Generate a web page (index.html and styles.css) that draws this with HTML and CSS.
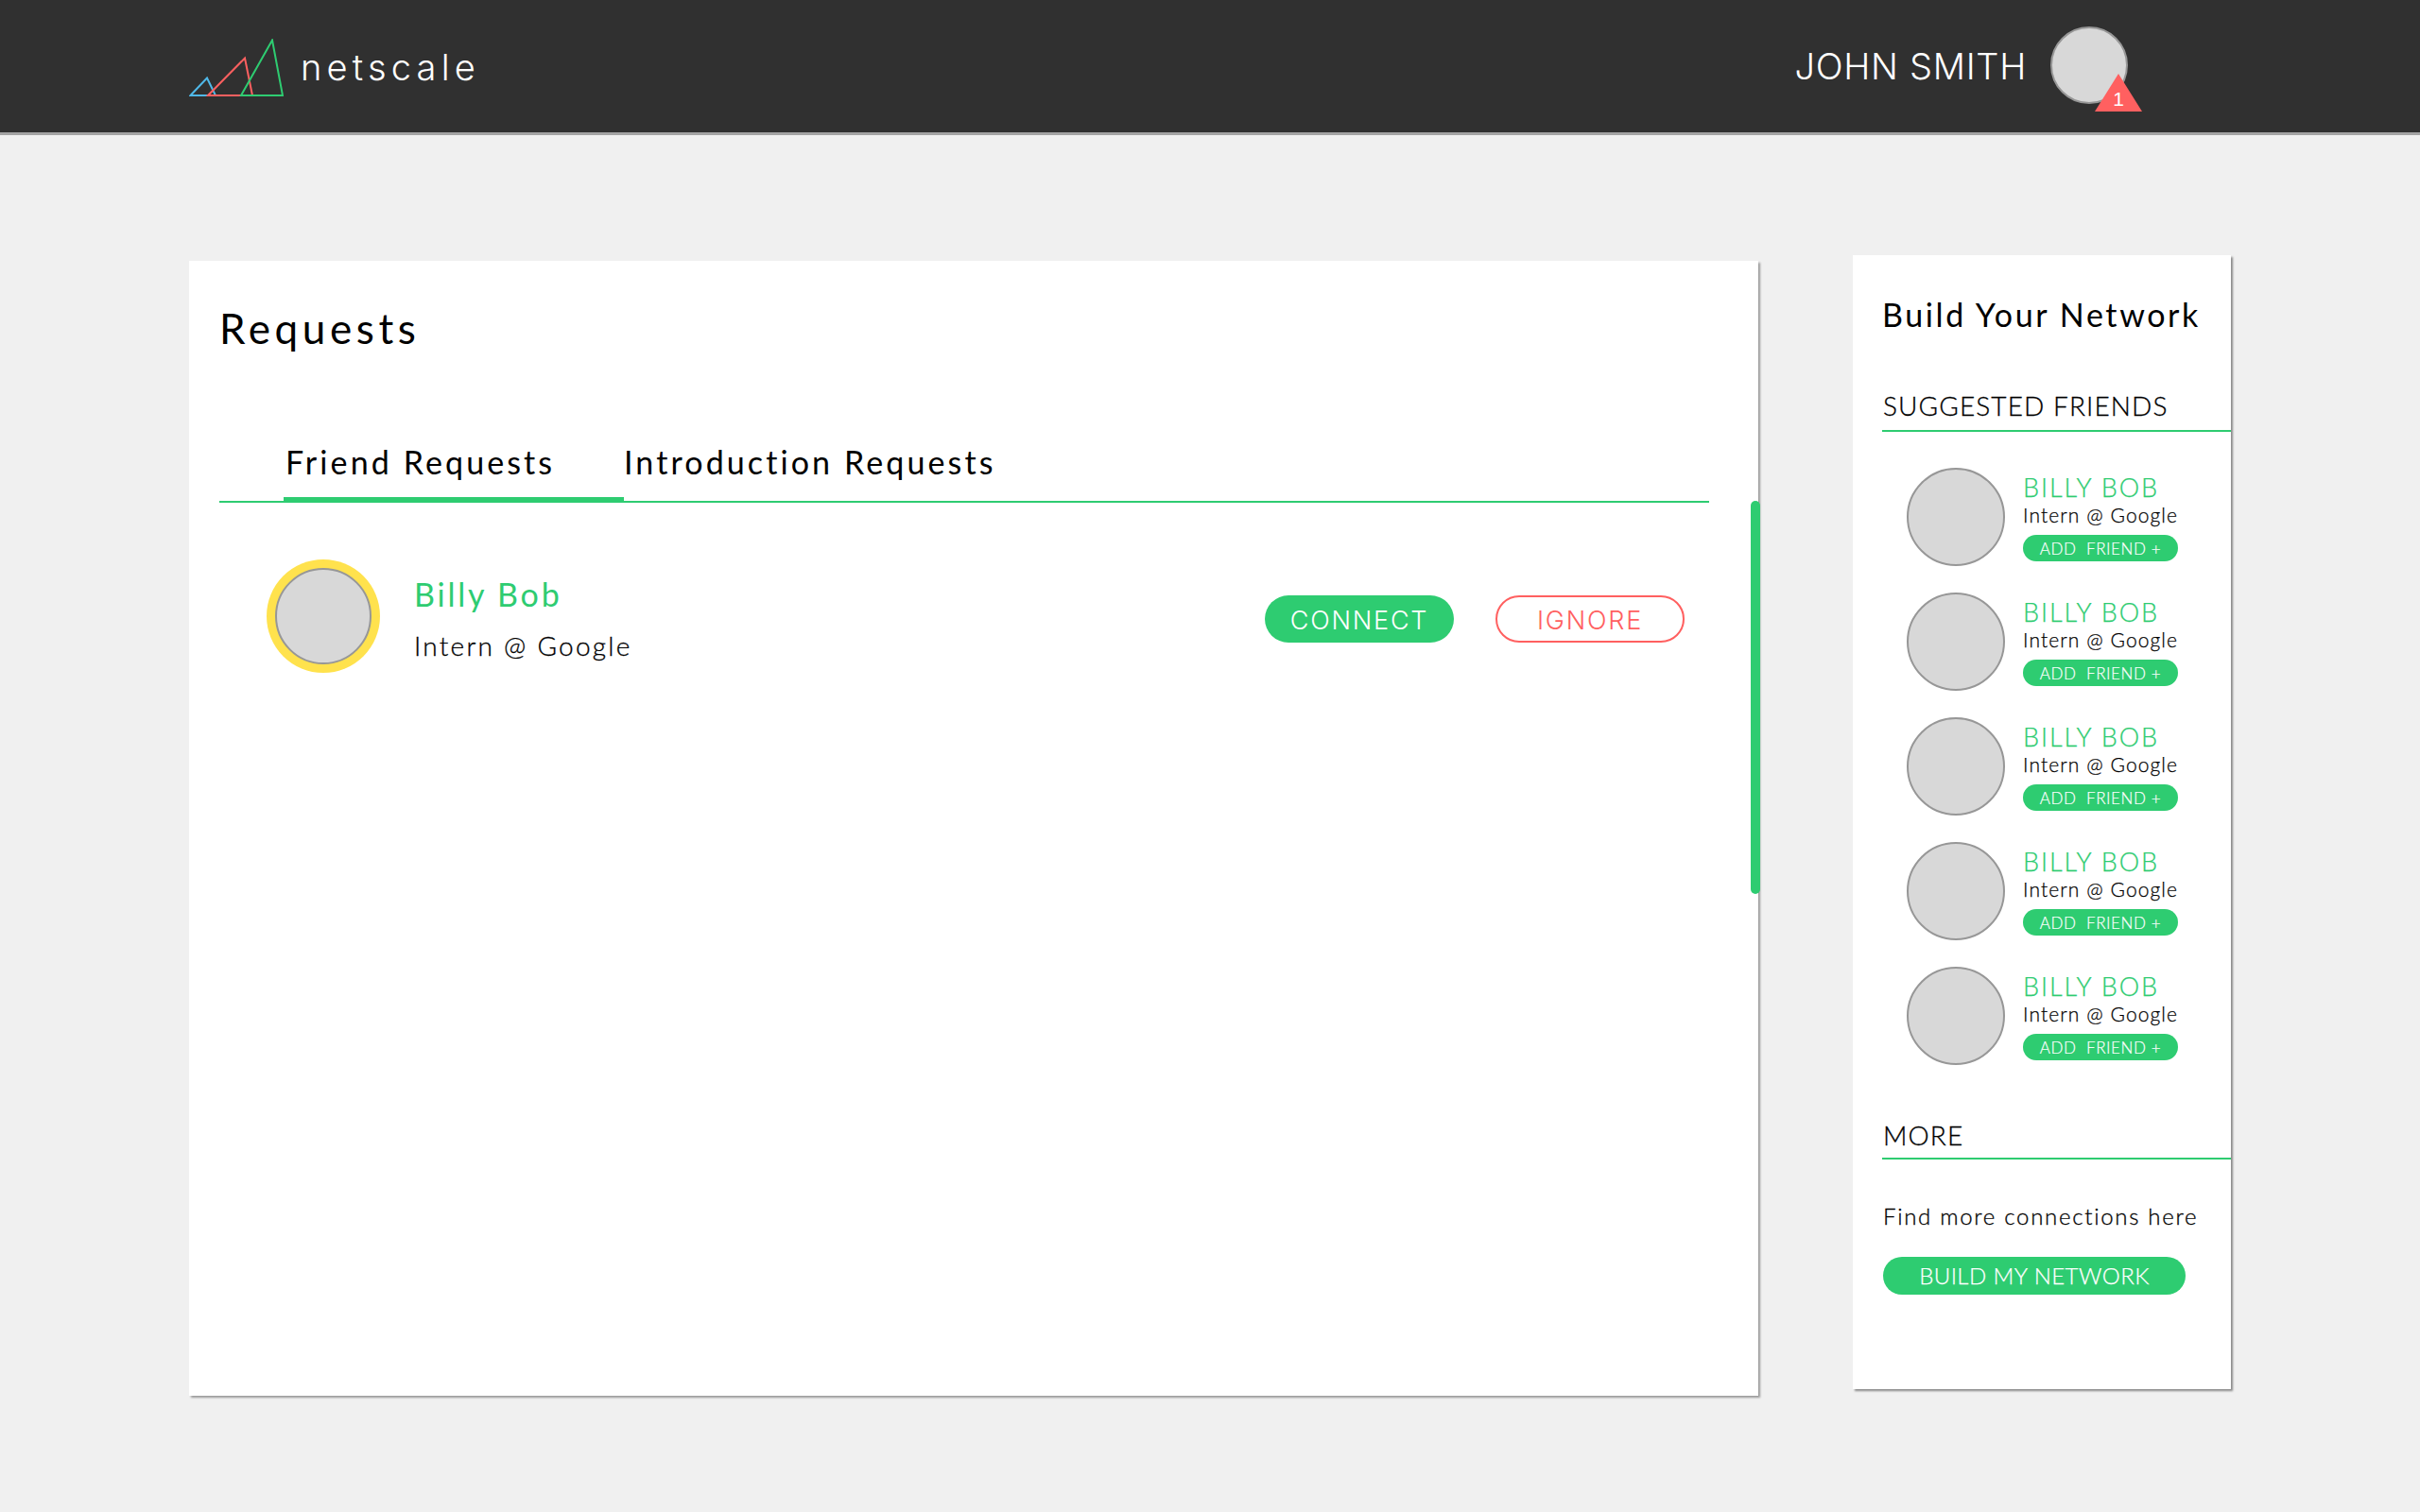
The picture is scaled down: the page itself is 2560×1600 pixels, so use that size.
FILE: index.html
```html
<!DOCTYPE html>
<html lang="en">
<head>
<meta charset="utf-8">
<title>netscale</title>
<link rel="stylesheet" href="styles.css">
</head>
<body>
<header class="topbar">
  <div class="brand">
    <svg class="brand-mark" viewBox="0 0 100 62" width="100" height="62" fill="none" stroke-width="2">
      <path d="M1.5 60 L19 41.5 L28 60 Z" stroke="#4fb8e8"/>
      <path d="M20 60 L59 20.5 L67 60 Z" stroke="#ff6060"/>
      <path d="M55 60 L88 1.5 L99 60 Z" stroke="#2ecc71"/>
    </svg>
    <span class="brand-name">netscale</span>
  </div>
  <div class="user">
    <span class="user-name">JOHN SMITH</span>
    <div class="user-avatar">
      <svg class="badge" viewBox="0 0 50 40" width="50" height="40">
        <path d="M0 40 L25 0 L50 40 Z" fill="#ff6060"/>
        <text x="25" y="34" text-anchor="middle" class="badge-num">1</text>
      </svg>
    </div>
  </div>
</header>

<main class="content">
  <section class="requests">
    <h1 class="requests-title">Requests</h1>
    <nav class="tabs">
      <div class="tab tab-active">Friend Requests</div>
      <div class="tab">Introduction Requests</div>
    </nav>
    <div class="request-row">
      <div class="ring"><div class="avatar avatar-lg"></div></div>
      <div class="request-info">
        <div class="request-name">Billy Bob</div>
        <div class="request-role">Intern @ Google</div>
      </div>
      <div class="request-actions">
        <div class="pill pill-connect">CONNECT</div>
        <div class="pill pill-ignore">IGNORE</div>
      </div>
    </div>
    <div class="scroll-thumb"></div>
  </section>

  <aside class="network">
    <h2 class="network-title">Build Your Network</h2>
    <h3 class="section-head">SUGGESTED FRIENDS</h3>
    <div class="suggestions">
      <div class="suggestion">
        <div class="avatar avatar-md"></div>
        <div class="suggestion-info">
          <div class="suggestion-name">BILLY BOB</div>
          <div class="suggestion-role">Intern @ Google</div>
          <div class="add-friend">ADD&nbsp; FRIEND +</div>
        </div>
      </div>
      <div class="suggestion">
        <div class="avatar avatar-md"></div>
        <div class="suggestion-info">
          <div class="suggestion-name">BILLY BOB</div>
          <div class="suggestion-role">Intern @ Google</div>
          <div class="add-friend">ADD&nbsp; FRIEND +</div>
        </div>
      </div>
      <div class="suggestion">
        <div class="avatar avatar-md"></div>
        <div class="suggestion-info">
          <div class="suggestion-name">BILLY BOB</div>
          <div class="suggestion-role">Intern @ Google</div>
          <div class="add-friend">ADD&nbsp; FRIEND +</div>
        </div>
      </div>
      <div class="suggestion">
        <div class="avatar avatar-md"></div>
        <div class="suggestion-info">
          <div class="suggestion-name">BILLY BOB</div>
          <div class="suggestion-role">Intern @ Google</div>
          <div class="add-friend">ADD&nbsp; FRIEND +</div>
        </div>
      </div>
      <div class="suggestion">
        <div class="avatar avatar-md"></div>
        <div class="suggestion-info">
          <div class="suggestion-name">BILLY BOB</div>
          <div class="suggestion-role">Intern @ Google</div>
          <div class="add-friend">ADD&nbsp; FRIEND +</div>
        </div>
      </div>
    </div>
    <h3 class="section-head section-more">MORE</h3>
    <p class="more-text">Find more connections here</p>
    <div class="build-btn">BUILD MY NETWORK</div>
  </aside>
</main>
</body>
</html>
```

FILE: styles.css
```css
* { box-sizing: border-box; }
html, body { margin: 0; padding: 0; }
body {
  background: #f0f0f0;
  min-height: 1600px;
  font-family: "Lato", "Liberation Sans", sans-serif;
  color: #000;
}

/* top bar */
.topbar {
  height: 143px;
  background: #303030;
  border-bottom: 3px solid #a3a3a3;
  display: flex;
  justify-content: space-between;
  align-items: center;
  padding: 0 309px 2px 200px;
}
.brand { display: flex; align-items: center; gap: 18px; }
.brand-mark { display: block; margin-top: 6px; }
.brand-name {
  font-family: "Inter", sans-serif;
  font-weight: 300;
  font-size: 38px;
  line-height: 46px;
  letter-spacing: 5.2px;
  color: #fff;
  margin-top: 3px;
}
.user { display: flex; align-items: center; gap: 25px; }
.user-name {
  font-family: "Inter", sans-serif;
  font-weight: 300;
  font-size: 38px;
  line-height: 46px;
  letter-spacing: 0.7px;
  color: #fff;
  margin-top: 2px;
}
.user-avatar {
  position: relative;
  width: 82px;
  height: 82px;
  border-radius: 50%;
  background: #d8d8d8;
  border: 2px solid #979797;
}
.badge { position: absolute; left: 45px; top: 48px; display: block; }
.badge-num { font-family: "Liberation Sans", sans-serif; font-size: 21px; fill: #fff; }

/* layout */
.content { display: flex; align-items: flex-start; gap: 100px; padding-left: 200px; }

/* requests card */
.requests {
  position: relative;
  width: 1660px;
  height: 1201px;
  margin-top: 133px;
  background: #fff;
  box-shadow: 2px 2px 2px #9a9a9a;
  padding: 41px 52px 0 32px;
}
.requests-title {
  margin: 0;
  font-size: 44px;
  line-height: 60px;
  font-weight: 400;
  letter-spacing: 4.6px;
}
.tabs {
  display: flex;
  height: 65px;
  margin-top: 90px;
  padding-left: 68px;
  border-bottom: 2px solid #2ecc71;
}
.tab {
  height: 65px;
  font-size: 34px;
  line-height: 44px;
  letter-spacing: 3.1px;
  white-space: nowrap;
}
.tab-active { width: 360px; padding-left: 2px; border-bottom: 6px solid #2ecc71; }
.request-row { display: flex; align-items: flex-start; margin-top: 60px; padding: 0 26px 0 50px; }
.ring {
  width: 120px;
  height: 120px;
  border-radius: 50%;
  background: #ffe24d;
  display: flex;
  align-items: center;
  justify-content: center;
}
.avatar { border-radius: 50%; background: #d8d8d8; border: 2px solid #979797; flex: none; }
.avatar-lg { width: 102px; height: 102px; }
.avatar-md { width: 104px; height: 104px; }
.request-info { margin: 15px 0 0 36px; }
.request-name { font-size: 34px; line-height: 44px; letter-spacing: 2.8px; color: #2ecc71; }
.request-role {
  font-size: 28px;
  line-height: 36px;
  margin-top: 14px;
  font-weight: 300;
  letter-spacing: 2.25px;
  -webkit-text-stroke: 0.3px #000;
}
.request-actions { margin: 38px 0 0 auto; display: flex; gap: 44px; }
.pill {
  width: 200px;
  height: 50px;
  padding-top: 2px;
  border-radius: 25px;
  display: flex;
  align-items: center;
  justify-content: center;
  font-family: "Inter", sans-serif;
  font-weight: 300;
  font-size: 27px;
  letter-spacing: 1.8px;
}
.pill-connect { background: #2ecc71; color: #fff; }
.pill-ignore { border: 2px solid #ff6060; color: #ff6060; }
.scroll-thumb {
  position: absolute;
  right: -2px;
  top: 254px;
  width: 10px;
  height: 416px;
  border-radius: 5px;
  background: #2ecc71;
}

/* network card */
.network {
  width: 400px;
  height: 1200px;
  margin-top: 127px;
  background: #fff;
  box-shadow: 2px 2px 2px #8a8a8a;
  padding: 41px 0 0 31px;
}
.network-title { margin: 0; font-size: 34px; line-height: 44px; font-weight: 400; letter-spacing: 2.6px; }
.section-head {
  margin: 56px 0 0;
  font-size: 28px;
  line-height: 36px;
  font-weight: 300;
  letter-spacing: 1.1px;
  padding: 0 0 8px 1px;
  border-bottom: 2px solid #2ecc71;
  -webkit-text-stroke: 0.3px #000;
}
.section-more { padding-bottom: 6px; }
.suggestions { display: flex; flex-direction: column; gap: 28px; margin-top: 38px; padding-left: 26px; }
.suggestion { display: flex; gap: 19px; align-items: flex-start; }
.suggestion-info { padding-top: 5px; }
.suggestion-name {
  font-size: 27px;
  line-height: 32px;
  font-weight: 300;
  letter-spacing: 1.9px;
  color: #2ecc71;
  -webkit-text-stroke: 0.25px #2ecc71;
}
.suggestion-role {
  font-size: 21px;
  line-height: 24px;
  letter-spacing: 1.1px;
  font-weight: 300;
  margin-top: 1px;
  -webkit-text-stroke: 0.25px #000;
}
.add-friend {
  width: 164px;
  height: 28px;
  margin-top: 9px;
  border-radius: 14px;
  background: #2ecc71;
  color: #fff;
  font-size: 17px;
  line-height: 29px;
  font-weight: 300;
  letter-spacing: 0.6px;
  text-align: center;
  -webkit-text-stroke: 0.2px #fff;
}
.more-text {
  margin: 44px 0 0 1px;
  font-size: 24px;
  line-height: 32px;
  font-weight: 300;
  letter-spacing: 1.7px;
  -webkit-text-stroke: 0.3px #000;
}
.build-btn {
  width: 320px;
  height: 40px;
  margin: 27px 0 0 1px;
  border-radius: 20px;
  background: #2ecc71;
  color: #fff;
  font-size: 24px;
  line-height: 40px;
  letter-spacing: 0.45px;
  text-align: center;
  font-weight: 300;
  -webkit-text-stroke: 0.25px #fff;
}
```
